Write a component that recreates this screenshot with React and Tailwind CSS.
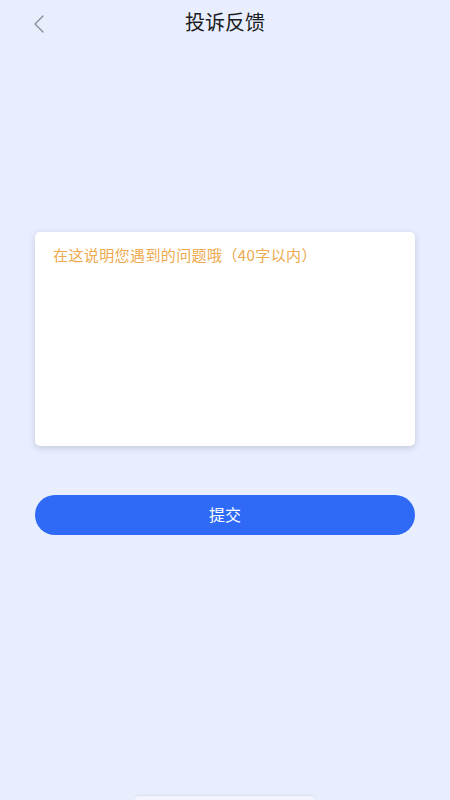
import { useState } from 'react';

const FONT = { fontFamily: '"Noto Sans CJK SC", "Noto Sans", sans-serif' };

export default function App() {
  const [text, setText] = useState('');

  return (
    <div className="flex h-[800px] w-full flex-col bg-[#e8eefd]" style={FONT}>
      {/* Header */}
      <div className="relative flex h-[44px] items-center justify-center">
        <button type="button" className="absolute left-[28px] top-[10px] p-1" aria-label="返回">
          <svg width="14" height="20" viewBox="0 0 14 20" fill="none">
            <path d="M11 2L3 10l8 8" stroke="#8a8d96" strokeWidth="1.4" strokeLinecap="round" strokeLinejoin="round" />
          </svg>
        </button>
        <h1 className="text-[20px] font-normal text-[#1c1c1e]">投诉反馈</h1>
      </div>

      {/* Feedback box */}
      <div className="mx-[35px] mt-[188px] h-[214px] rounded-[5px] bg-white shadow-[0_2px_6px_rgba(80,90,120,0.25)]">
        <textarea
          value={text}
          onChange={(e) => setText(e.target.value)}
          maxLength={40}
          placeholder="在这说明您遇到的问题哦（40字以内）"
          className="h-full w-full resize-none bg-transparent px-[18px] pt-[13px] text-[15px] leading-[20px] tracking-[0.4px] text-[#333] placeholder-[#eea94c] outline-none"
        />
      </div>

      <button
        type="button"
        className="mx-[35px] mt-[49px] h-[40px] rounded-full bg-[#2f6af6] pb-[3px] text-[16px] text-white"
      >
        提交
      </button>

      <div className="mt-auto flex justify-center">
        <div className="h-[4px] w-[180px] rounded-t-sm bg-[#f2f5fe] shadow-[0_-1px_2px_rgba(120,130,160,0.15)]" />
      </div>
    </div>
  );
}
